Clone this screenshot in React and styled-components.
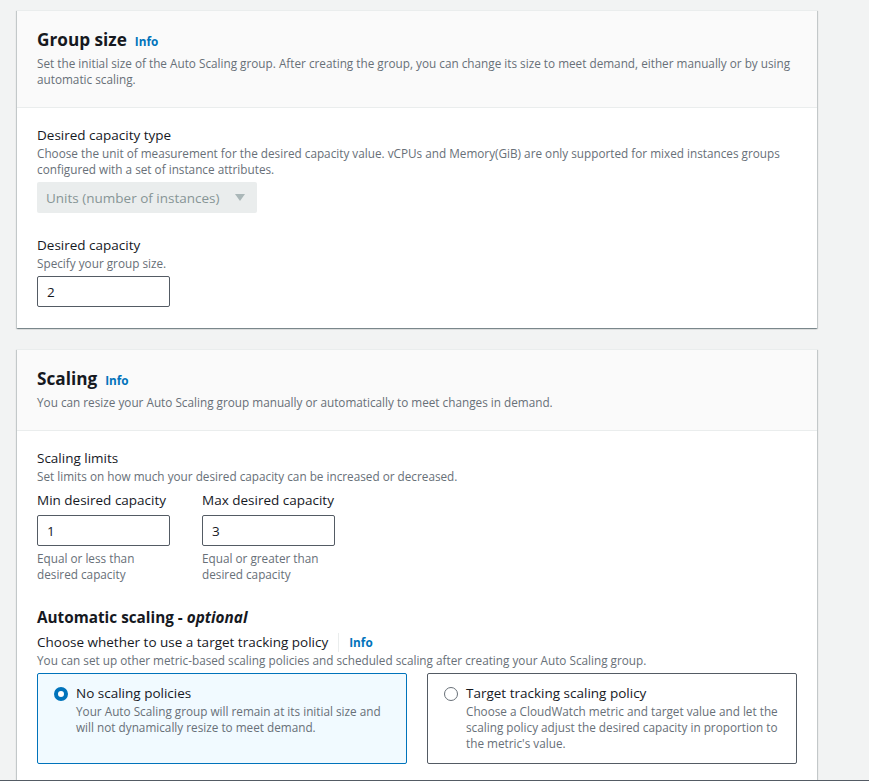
import React from "react";
import styled, { createGlobalStyle } from "styled-components";

const GlobalStyle = createGlobalStyle`
  html, body {
    margin: 0;
    padding: 0;
    background-color: #f2f3f3;
  }
  body {
    font-family: "Open Sans", "Noto Sans", sans-serif;
    color: #16191f;
    -webkit-font-smoothing: antialiased;
  }
  * { box-sizing: border-box; }
`

const Page = styled.div`
  display: flex;
  flex-direction: column;
  gap: 21px;
  padding: 10px 0 20px 17px;
`

const Container = styled.section`
  width: 800px;
  background-color: #ffffff;
  border-top: 1px solid #eaeded;
  box-shadow: 0 1px 1px 0 rgba(0, 28, 36, .3), 1px 1px 1px 0 rgba(0, 28, 36, .15), -1px 1px 1px 0 rgba(0, 28, 36, .15);
`

const Header = styled.div`
  background-color: #fafafa;
  border-bottom: 1px solid #eaeded;
  padding: 17px 20px 20px 20px;
`

const Title = styled.h2`
  display: flex;
  align-items: baseline;
  gap: 8px;
  margin: 0 0 2px 0;
  font-size: 17.2px;
  line-height: 24px;
  font-weight: 700;
  color: #16191f;
`

const InfoLink = styled.a`
  font-size: 11.75px;
  font-weight: 700;
  color: #0073bb;
  text-decoration: none;
  cursor: pointer;
`

const Description = styled.p`
  margin: 0;
  font-size: 11.75px;
  line-height: 16px;
  color: #687078;
`

const Body = styled.div`
  padding: 17px 20px 21px 20px;
  display: flex;
  flex-direction: column;
  align-items: flex-start;
`

const Field = styled.div`
  display: flex;
  flex-direction: column;
  align-items: flex-start;
  margin-top: ${(p) => p.$top || 0}px;
  width: ${(p) => (p.$full ? "100%" : "auto")};
`

const Label = styled.label`
  display: flex;
  align-items: center;
  font-size: 13.5px;
  line-height: 20px;
  color: #16191f;
`

const Divider = styled.span`
  display: inline-block;
  width: 1px;
  height: 19px;
  background-color: #eaeded;
  margin: 0 10px 0 10px;
`

const Control = styled.div`
  margin-top: ${(p) => p.$top || 5}px;
`

const SelectBox = styled.div`
  display: flex;
  align-items: center;
  justify-content: space-between;
  width: 220px;
  height: 31px;
  padding: 0 12px 0 9px;
  border-radius: 2px;
  background-color: #eaeded;
  color: #879596;
  font-size: 13.5px;
  cursor: default;
`

const Input = styled.input`
  display: block;
  width: 133px;
  height: 31px;
  padding: 0 9px;
  border: 1px solid #545b64;
  border-radius: 2px;
  font-family: inherit;
  font-size: 13.5px;
  color: #16191f;
  background-color: #ffffff;
  outline: none;
`

const LimitsRow = styled.div`
  display: flex;
  gap: 32px;
  margin-top: 6px;
`

const LimitColumn = styled.div`
  width: 133px;
  display: flex;
  flex-direction: column;
`

const Hint = styled.div`
  margin-top: 4px;
  font-size: 11.75px;
  line-height: 16px;
  color: #687078;
`

const SubHeading = styled.h3`
  margin: 24px 0 4px 0;
  font-size: 15.3px;
  line-height: 22px;
  font-weight: 700;
  color: #16191f;

  & em {
    font-style: italic;
  }
`

const TileGrid = styled.div`
  display: grid;
  grid-template-columns: 1fr 1fr;
  gap: 20px;
  width: 100%;
  margin-top: 5px;
`

const Tile = styled.label`
  display: flex;
  gap: 8px;
  padding: 9px 16px 12px 16px;
  border: 1px solid ${(p) => (p.$checked ? "#0073bb" : "#545b64")};
  border-radius: 2px;
  background-color: ${(p) => (p.$checked ? "#f1faff" : "#ffffff")};
  cursor: pointer;
`

const Radio = styled.span`
  flex: 0 0 14px;
  width: 14px;
  height: 14px;
  margin-top: 4px;
  border-radius: 50%;
  background-color: #ffffff;
  border: ${(p) => (p.$checked ? "4px solid #0073bb" : "1.5px solid #687078")};
`

const TileText = styled.div`
  display: flex;
  flex-direction: column;
`

const TileTitle = styled.span`
  font-size: 13.5px;
  line-height: 20px;
  color: #16191f;
`

const Footer = styled.div`
  position: fixed;
  left: 0;
  right: 0;
  bottom: 0;
  height: 1px;
  background-color: #545b64;
`

function Caret() {
    return (
        <svg width="10" height="8" viewBox="0 0 10 8">
            <path d="M0 0 L10 0 L5 7 Z" fill="#aab7b8"/>
        </svg>
    );
}

function SectionHeader({title, children}) {
    return (
        <Header>
            <Title>
                {title}
                <InfoLink>Info</InfoLink>
            </Title>
            <Description>{children}</Description>
        </Header>
    );
}

function App() {
    const policies = [
        {
            id: "none",
            title: "No scaling policies",
            text: "Your Auto Scaling group will remain at its initial size and will not dynamically resize to meet demand.",
            checked: true,
        },
        {
            id: "target",
            title: "Target tracking scaling policy",
            text: "Choose a CloudWatch metric and target value and let the scaling policy adjust the desired capacity in proportion to the metric's value.",
            checked: false,
        },
    ];

    return (
        <>
            <GlobalStyle/>
            <Page>
                <Container>
                    <SectionHeader title="Group size">
                        Set the initial size of the Auto Scaling group. After creating the group, you can change its size to meet demand, either manually or by using automatic scaling.
                    </SectionHeader>
                    <Body>
                        <Field $full>
                            <Label>Desired capacity type</Label>
                            <Description>
                                Choose the unit of measurement for the desired capacity value. vCPUs and Memory(GiB) are only supported for mixed instances groups configured with a set of instance attributes.
                            </Description>
                            <Control $top={5}>
                                <SelectBox>
                                    Units (number of instances)
                                    <Caret/>
                                </SelectBox>
                            </Control>
                        </Field>
                        <Field $top={22}>
                            <Label>Desired capacity</Label>
                            <Description>Specify your group size.</Description>
                            <Control $top={5}>
                                <Input defaultValue="2"/>
                            </Control>
                        </Field>
                    </Body>
                </Container>

                <Container>
                    <SectionHeader title="Scaling">
                        You can resize your Auto Scaling group manually or automatically to meet changes in demand.
                    </SectionHeader>
                    <Body>
                        <Field $full>
                            <Label>Scaling limits</Label>
                            <Description>Set limits on how much your desired capacity can be increased or decreased.</Description>
                            <LimitsRow>
                                <LimitColumn>
                                    <Label>Min desired capacity</Label>
                                    <Control $top={5}>
                                        <Input defaultValue="1"/>
                                    </Control>
                                    <Hint>Equal or less than desired capacity</Hint>
                                </LimitColumn>
                                <LimitColumn>
                                    <Label>Max desired capacity</Label>
                                    <Control $top={5}>
                                        <Input defaultValue="3"/>
                                    </Control>
                                    <Hint>Equal or greater than desired capacity</Hint>
                                </LimitColumn>
                            </LimitsRow>
                        </Field>

                        <SubHeading>
                            Automatic scaling - <em>optional</em>
                        </SubHeading>
                        <Field $full>
                            <Label>
                                Choose whether to use a target tracking policy
                                <Divider/>
                                <InfoLink>Info</InfoLink>
                            </Label>
                            <Description>
                                You can set up other metric-based scaling policies and scheduled scaling after creating your Auto Scaling group.
                            </Description>
                            <TileGrid>
                                {policies.map((p) => (
                                    <Tile key={p.id} $checked={p.checked}>
                                        <Radio $checked={p.checked}/>
                                        <TileText>
                                            <TileTitle>{p.title}</TileTitle>
                                            <Description>{p.text}</Description>
                                        </TileText>
                                    </Tile>
                                ))}
                            </TileGrid>
                        </Field>
                    </Body>
                </Container>
            </Page>
            <Footer/>
        </>
    );
}

export default App;
